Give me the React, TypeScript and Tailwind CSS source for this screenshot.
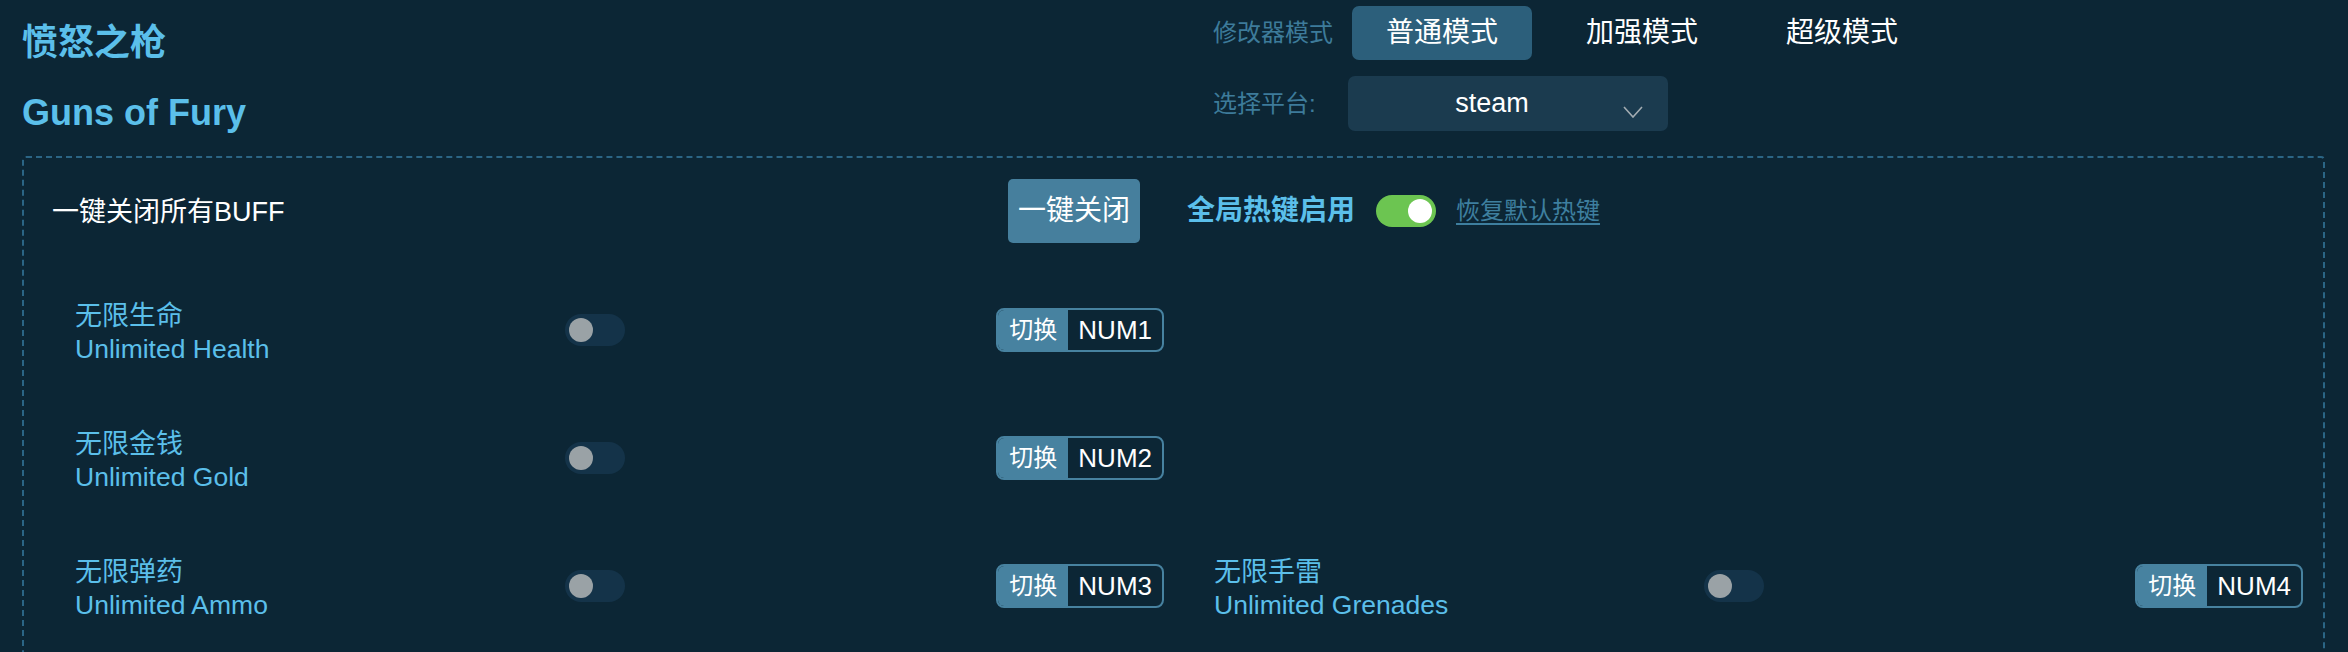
import clsx from "clsx";

interface Cheat {
  zh: string;
  en: string;
  key: string;
}

const rows: [Cheat, Cheat | null][] = [
  [{ zh: "无限生命", en: "Unlimited Health", key: "NUM1" }, null],
  [{ zh: "无限金钱", en: "Unlimited Gold", key: "NUM2" }, null],
  [
    { zh: "无限弹药", en: "Unlimited Ammo", key: "NUM3" },
    { zh: "无限手雷", en: "Unlimited Grenades", key: "NUM4" },
  ],
];

const modes = ["普通模式", "加强模式", "超级模式"];

function Toggle({ on = false }: { on?: boolean }) {
  return (
    <span
      className={clsx(
        "flex h-[32px] w-[60px] shrink-0 items-center rounded-full px-[4px]",
        on ? "justify-end bg-[#6cc551]" : "justify-start bg-[#143349]"
      )}
    >
      <span className={clsx("h-[24px] w-[24px] rounded-full", on ? "bg-white" : "bg-[#9aa2a6]")} />
    </span>
  );
}

function HotkeyBadge({ label }: { label: string }) {
  return (
    <div className="ml-auto flex h-[44px] overflow-hidden rounded-[8px] border-2 border-[#4782a0]">
      <span className="flex items-center bg-[#4782a0] px-[11px] text-[24px] text-white">切换</span>
      <span className="flex items-center px-[10px] text-[26px] text-white">{label}</span>
    </div>
  );
}

function CheatItem({ cheat }: { cheat: Cheat | null }) {
  if (!cheat) return <div className="h-[128px]" />;
  return (
    <div className="flex h-[128px] items-center pl-[23px]">
      <div className="w-[490px] pt-[5px] text-[#5bbfea]">
        <div className="text-[27px] leading-[33px]">{cheat.zh}</div>
        <div className="text-[26.5px] leading-[33px]">{cheat.en}</div>
      </div>
      <Toggle />
      <HotkeyBadge label={cheat.key} />
    </div>
  );
}

export default function App() {
  return (
    <div className="min-h-screen bg-[#0c2635] pl-[22px] pr-[23px] font-['Liberation_Sans','Noto_Sans_CJK_SC',sans-serif]">
      <header className="flex h-[156px]">
        <div className="w-[1191px] pt-[16px] text-[36px] font-bold text-[#5bbfea]">
          <div className="leading-[54px]">愤怒之枪</div>
          <div className="mt-[16px] leading-[54px]">Guns of Fury</div>
        </div>
        <div className="pt-[6px]">
          <div className="flex h-[54px] items-center">
            <span className="w-[139px] text-[24px] text-[#3d7b9a]">修改器模式</span>
            <div className="flex gap-[20px]">
              {modes.map((m, i) => (
                <button
                  key={m}
                  className={clsx(
                    "h-[54px] w-[180px] rounded-[7px] text-[28px] text-white",
                    i === 0 && "bg-[#2c5f7b]"
                  )}
                >
                  {m}
                </button>
              ))}
            </div>
          </div>
          <div className="mt-[16px] flex h-[55px] items-center">
            <span className="w-[135px] text-[24px] text-[#3d7b9a]">选择平台:</span>
            <div className="relative flex h-[55px] w-[320px] items-center rounded-[7px] bg-[#1b3b4f] pr-[32px]">
              <span className="flex-1 text-center text-[27px] text-white">steam</span>
              <svg
                className="absolute right-[25px] top-[30px]"
                width="20"
                height="12"
                viewBox="0 0 20 12"
                fill="none"
                stroke="#a3acb2"
                strokeWidth="1.6"
              >
                <path d="M1 1l9 10 9-10" />
              </svg>
            </div>
          </div>
        </div>
      </header>

      <section className="rounded-[4px] border-2 border-dashed border-[#2b6585] pb-[40px] pl-[28px] pr-[20px] pt-[21px]">
        <div className="flex h-[64px] items-center">
          <span className="w-[956px] pt-[3px] text-[27px] text-white">一键关闭所有BUFF</span>
          <button className="h-[64px] w-[132px] rounded-[5px] bg-[#467f9d] text-[28px] text-white">一键关闭</button>
          <span className="ml-[47px] text-[28px] font-bold text-[#5bbfea]">全局热键启用</span>
          <span className="ml-[21px]">
            <Toggle on />
          </span>
          <a className="ml-[20px] text-[24px] text-[#3e7f9f] underline underline-offset-4">恢复默认热键</a>
        </div>

        <div className="mt-[23px] grid grid-cols-2 gap-x-[27px]">
          {rows.map(([left, right], i) => (
            <div key={i} className="contents">
              <CheatItem cheat={left} />
              <CheatItem cheat={right} />
            </div>
          ))}
        </div>
      </section>
    </div>
  );
}
